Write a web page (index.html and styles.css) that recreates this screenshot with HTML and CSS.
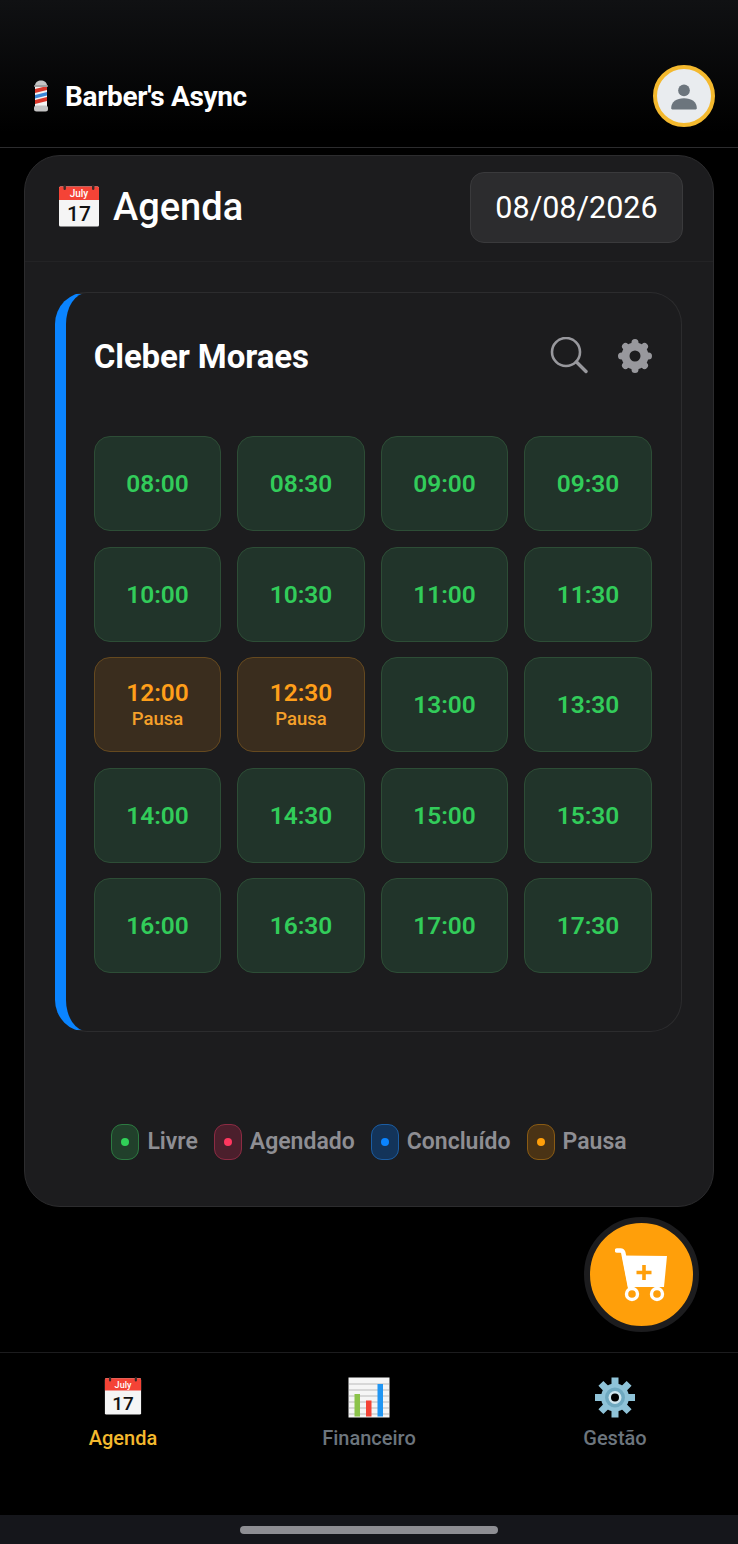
FILE: index.html
```html
<!DOCTYPE html>
<html lang="pt-BR">
<head>
    <meta charset="UTF-8">
    <meta name="viewport" content="width=device-width, initial-scale=1.0">
    <title>Barber's Async</title>
    <link rel="stylesheet" href="styles.css">
</head>
<body>
    <header class="topbar">
        <div class="brand">
            <svg class="pole" viewBox="0 0 16 32" width="16" height="32">
                <rect x="2" y="6" width="12" height="20" fill="#f4f4f4"/>
                <path d="M2 9l12-3v4L2 13zM2 20l12-3v4L2 24z" fill="#d8362a"/>
                <path d="M2 15l12-3v3.500L2 18.500z" fill="#3a86d8"/>
                <path d="M2 6C2 2 5 .5 8 .5S14 2 14 6z" fill="#c4c4c4"/>
                <rect x="1" y="5" width="14" height="2" rx="1" fill="#a0a0a0"/>
                <rect x="1" y="25.500" width="14" height="6" rx="2.500" fill="#c4c4c4"/>
            </svg>
            <span class="brand-name">Barber's Async</span>
        </div>
        <div class="avatar">
            <svg viewBox="0 0 24 24" width="28" height="28">
                <circle cx="12" cy="7.200" r="5" fill="#6c757d"/>
                <path d="M1 22.500c0-5.500 4.500-8.500 11-8.500s11 3 11 8.500c0 .6-.4 1-1 1H2c-.6 0-1-.4-1-1z" fill="#6c757d"/>
            </svg>
        </div>
    </header>

    <main class="content">
        <section class="agenda">
            <div class="agenda-head">
                <h1 class="agenda-title">
                    <svg class="cal-big" viewBox="0 0 42 42">
                        <rect x="1" y="1.500" width="40" height="40" rx="1.500" fill="#f5f5f5"/>
                        <path d="M1 3a1.500 1.500 0 0 1 1.500-1.500h37A1.500 1.500 0 0 1 41 3v12H1z" fill="#f44336"/>
                        <rect x="5.500" y="0" width="2.400" height="5" rx="1.200" fill="#3a2a2a"/>
                        <rect x="34" y="0" width="2.400" height="5" rx="1.200" fill="#3a2a2a"/>
                        <text x="21" y="12" class="cal-month">July</text>
                        <text x="21" y="36" class="cal-day">17</text>
                    </svg>
                    Agenda
                </h1>
                <div class="date-box">08/08/2026</div>
            </div>

            <div class="barber-card">
                <div class="barber-head">
                    <h2 class="barber-name">Cleber Moraes</h2>
                    <div class="barber-tools">
                        <svg viewBox="0 0 38 38" width="38" height="38" fill="none" stroke="#98989d" stroke-width="2.600" stroke-linecap="round">
                            <circle cx="16" cy="15" r="14"/>
                            <path d="M26.500 25l9.500 9.500" stroke-width="3.400"/>
                        </svg>
                        <svg viewBox="0 0 36 36" width="36" height="36" stroke="#98989d" stroke-linecap="round">
                            <circle cx="18" cy="18" r="9.500" fill="none" stroke-width="8"/>
                            <path d="M18 4.500v3M18 28.500v3M4.500 18h3M28.500 18h3M8.500 8.500l2 2M25.500 25.500l2 2M27.500 8.500l-2 2M10.500 25.500l-2 2" stroke-width="7"/>
                        </svg>
                    </div>
                </div>

                <div class="slots">
                    <div class="slot">08:00</div>
                    <div class="slot">08:30</div>
                    <div class="slot">09:00</div>
                    <div class="slot">09:30</div>
                    <div class="slot">10:00</div>
                    <div class="slot">10:30</div>
                    <div class="slot">11:00</div>
                    <div class="slot">11:30</div>
                    <div class="slot slot-pause">12:00<small>Pausa</small></div>
                    <div class="slot slot-pause">12:30<small>Pausa</small></div>
                    <div class="slot">13:00</div>
                    <div class="slot">13:30</div>
                    <div class="slot">14:00</div>
                    <div class="slot">14:30</div>
                    <div class="slot">15:00</div>
                    <div class="slot">15:30</div>
                    <div class="slot">16:00</div>
                    <div class="slot">16:30</div>
                    <div class="slot">17:00</div>
                    <div class="slot">17:30</div>
                </div>
            </div>

            <div class="legend">
                <div class="legend-item"><span class="chip chip-green"><i></i></span>Livre</div>
                <div class="legend-item"><span class="chip chip-red"><i></i></span>Agendado</div>
                <div class="legend-item"><span class="chip chip-blue"><i></i></span>Concluído</div>
                <div class="legend-item"><span class="chip chip-orange"><i></i></span>Pausa</div>
            </div>
        </section>
    </main>

    <button class="fab" aria-label="Novo">
        <svg viewBox="0 0 54 54" width="54" height="54">
            <path d="M2 2.500h3.500c1.500 0 2.400.8 2.800 2.200L15 39" fill="none" stroke="#fff" stroke-width="4.500" stroke-linecap="round"/>
            <path d="M7 7.500l45 .5-3 31H13z" fill="#fff"/>
            <path d="M29 17v15M21.500 24.500h15" stroke="#ff9f0a" stroke-width="3.600"/>
            <circle cx="17" cy="46" r="5.500" fill="none" stroke="#fff" stroke-width="3.400"/>
            <circle cx="42" cy="46" r="5.500" fill="none" stroke="#fff" stroke-width="3.400"/>
        </svg>
    </button>

    <nav class="tabbar">
        <a class="tab tab-active">
            <svg class="tab-cal" viewBox="0 0 42 42">
                <rect x="1" y="1.500" width="40" height="40" rx="1.500" fill="#f5f5f5"/>
                <path d="M1 3a1.500 1.500 0 0 1 1.500-1.500h37A1.500 1.500 0 0 1 41 3v12H1z" fill="#f44336"/>
                <rect x="5.500" y="0" width="2.400" height="5" rx="1.200" fill="#3a2a2a"/>
                <rect x="34" y="0" width="2.400" height="5" rx="1.200" fill="#3a2a2a"/>
                <text x="21" y="12" class="cal-month">July</text>
                <text x="21" y="36" class="cal-day">17</text>
            </svg>
            Agenda
        </a>
        <a class="tab">
            <svg class="tab-icon" viewBox="0 0 42 41">
                <rect x="0.500" y="0.500" width="41" height="40" fill="#f5f5f5"/>
                <path d="M1 7h40M1 13h40M1 19h40M1 25h40M1 31h40M1 37h40" stroke="#b9b9b9" stroke-width="1"/>
                <rect x="6.500" y="17" width="5.500" height="22.500" fill="#8bc34a"/>
                <rect x="18" y="23.500" width="5.500" height="16" fill="#f44336"/>
                <rect x="29.500" y="7" width="5.500" height="32.500" fill="#2196f3"/>
            </svg>
            Financeiro
        </a>
        <a class="tab">
            <svg class="tab-icon" viewBox="0 0 42 41">
                <path d="M21 .5v8M21 32.500v8M1 20.500h8M33 20.500h8M6.900 6.400l5.600 5.600M29.500 29l5.600 5.600M35.100 6.400l-5.600 5.600M12.500 29l-5.600 5.600" stroke="#8fc3d8" stroke-width="7"/>
                <circle cx="21" cy="20.500" r="14" fill="#8fc3d8"/>
                <circle cx="21" cy="20.500" r="10" fill="#6fa9c0"/>
                <circle cx="21" cy="20.500" r="6.500" fill="#cfe6ef"/>
                <circle cx="21" cy="20.500" r="4" fill="#000"/>
            </svg>
            Gestão
        </a>
    </nav>

    <div class="home-bar"><span></span></div>
</body>
</html>
```

FILE: styles.css
```css
* { box-sizing: border-box; }

body {
    margin: 0;
    width: 738px;
    height: 1544px;
    display: flex;
    flex-direction: column;
    position: relative;
    overflow: hidden;
    background: #000;
    color: #fff;
    font-family: Roboto, "Liberation Sans", sans-serif;
}

.cal-month { font-size: 10px; font-weight: 500; fill: #fff; text-anchor: middle; font-family: Roboto, sans-serif; }
.cal-day { font-size: 21px; font-weight: 500; fill: #111; text-anchor: middle; font-family: Roboto, sans-serif; }

/* topo */
.topbar {
    height: 148px;
    flex: none;
    padding: 45px 23px 0 33px;
    display: flex;
    align-items: center;
    justify-content: space-between;
    background: linear-gradient(180deg, #101113, #000 90%);
    border-bottom: 1px solid #2c2c2e;
}
.brand { display: flex; align-items: center; gap: 16px; }
.pole { flex: none; }
.brand-name { font-size: 28px; font-weight: 700; letter-spacing: -0.35px; }
.avatar {
    width: 62px;
    height: 62px;
    border-radius: 50%;
    border: 4px solid #f4b92e;
    background: #e9ecef;
    display: flex;
    align-items: center;
    justify-content: center;
}

/* card principal */
.content { flex: 1; padding: 7px 24px 0; }
.agenda {
    height: 1052px;
    background: #1c1c1e;
    border: 1px solid #2c2c2e;
    border-radius: 36px;
    display: flex;
    flex-direction: column;
}
.agenda-head {
    height: 106px;
    flex: none;
    padding: 16px 30px 18px 33px;
    display: flex;
    align-items: center;
    justify-content: space-between;
    border-bottom: 1px solid #232325;
}
.agenda-title {
    margin: 0;
    padding-bottom: 2px;
    display: flex;
    align-items: center;
    gap: 13px;
    font-size: 38px;
    font-weight: 500;
}
.cal-big { width: 42px; height: 42px; margin-bottom: 2px; }
.date-box {
    width: 213px;
    height: 71px;
    display: flex;
    align-items: center;
    justify-content: center;
    background: #2c2c2e;
    border: 1px solid #3a3a3c;
    border-radius: 14px;
    font-size: 30.500px;
}

/* barbeiro */
.barber-card {
    margin: 30px 31px 0 30px;
    height: 740px;
    padding: 0 29.250px 0 27.750px;
    border: 1px solid #2c2c2e;
    border-left: 11px solid #0a84ff;
    border-radius: 32px;
}
.barber-head {
    height: 143px;
    padding-bottom: 17px;
    display: flex;
    align-items: center;
    justify-content: space-between;
}
.barber-name { margin: 0; font-size: 33px; font-weight: 700; letter-spacing: -0.1px; }
.barber-tools { display: flex; align-items: center; gap: 29px; margin-right: -1.250px; }

.slots {
    display: grid;
    grid-template-columns: repeat(4, 1fr);
    grid-auto-rows: 95px;
    gap: 15.500px 16px;
}
.slot {
    display: flex;
    flex-direction: column;
    align-items: center;
    justify-content: center;
    background: #21342a;
    border: 1px solid #2d4d36;
    border-radius: 16px;
    color: #32cc5a;
    font-size: 24.500px;
    font-weight: 600;
}
.slot-pause {
    background: #3a2d1e;
    border-color: #65491f;
    color: #ff9f1a;
    line-height: 28px;
}
.slot-pause small { font-size: 18.500px; font-weight: 500; line-height: 24px; color: #f5a02a; }

/* legenda */
.legend {
    flex: 1;
    padding: 47px 0 2px;
    display: flex;
    align-items: center;
    justify-content: center;
    gap: 16px;
}
.legend-item {
    display: flex;
    align-items: center;
    gap: 8px;
    color: #8e8e93;
    font-size: 23px;
    font-weight: 600;
}
.chip {
    width: 28px;
    height: 36px;
    border-radius: 11px;
    border: 1px solid;
    display: flex;
    align-items: center;
    justify-content: center;
}
.chip i { width: 8px; height: 8px; border-radius: 50%; }
.chip-green { background: #21402b; border-color: #2c7a41; }
.chip-green i { background: #30d158; }
.chip-red { background: #4b1f2c; border-color: #8c2b43; }
.chip-red i { background: #ff375f; }
.chip-blue { background: #13345a; border-color: #1b5da3; }
.chip-blue i { background: #0a84ff; }
.chip-orange { background: #4a3315; border-color: #8a5b14; }
.chip-orange i { background: #ff9f0a; }

/* botao flutuante */
.fab {
    position: absolute;
    left: 584px;
    top: 1217px;
    width: 115px;
    height: 115px;
    padding: 0;
    border-radius: 50%;
    border: 6px solid #1c1c1e;
    background: #ff9f0a;
    display: flex;
    align-items: center;
    justify-content: center;
}

/* navegacao */
.tabbar {
    height: 163px;
    flex: none;
    padding-top: 24px;
    display: grid;
    grid-template-columns: repeat(3, 1fr);
    border-top: 1px solid #1c1c1e;
    background: #000;
}
.tab {
    display: flex;
    flex-direction: column;
    align-items: center;
    gap: 8px;
    color: #6c757d;
    font-size: 20px;
    font-weight: 500;
}
.tab-active { color: #f4b92e; }
.tab-icon { width: 42px; height: 41px; }
.tab-cal { width: 38px; height: 38px; margin-bottom: 3px; }

.home-bar {
    height: 29px;
    flex: none;
    padding-top: 11px;
    display: flex;
    justify-content: center;
    background: #15161b;
}
.home-bar span { width: 258px; height: 8px; border-radius: 4px; background: #8e8e93; }
```
